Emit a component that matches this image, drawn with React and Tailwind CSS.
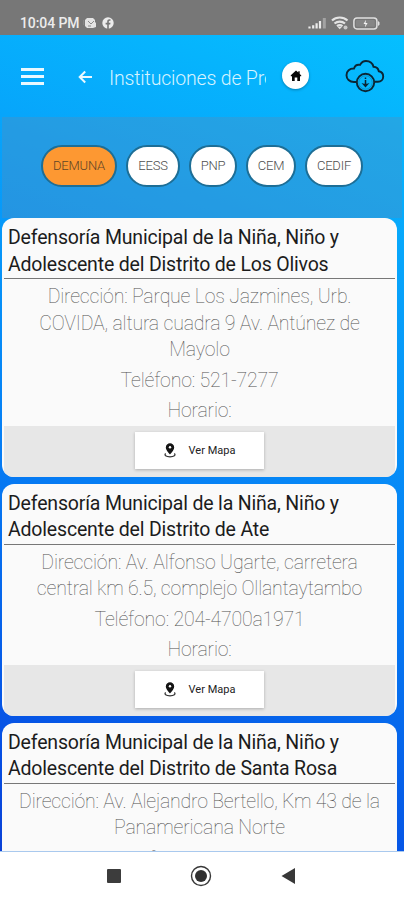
import React from 'react';

const filters = [
  { name: 'DEMUNA', style: 'w-[76px] bg-[#fd9832] text-[#5f4527]' },
  { name: 'EESS', style: 'w-[54px] bg-white text-[#4e4e4e]' },
  { name: 'PNP', style: 'w-[48px] bg-white text-[#4e4e4e]' },
  { name: 'CEM', style: 'w-[50px] bg-white text-[#4e4e4e]' },
  { name: 'CEDIF', style: 'w-[58px] bg-white text-[#4e4e4e]' },
];

const places = [
  {
    title: 'Defensoría Municipal de la Niña, Niño y\nAdolescente del Distrito de Los Olivos',
    address: 'Dirección: Parque Los Jazmines, Urb.\nCOVIDA, altura cuadra 9 Av. Antúnez de\nMayolo',
    phone: 'Teléfono: 521-7277',
  },
  {
    title: 'Defensoría Municipal de la Niña, Niño y\nAdolescente del Distrito de Ate',
    address: 'Dirección: Av. Alfonso Ugarte, carretera\ncentral km 6.5, complejo Ollantaytambo',
    phone: 'Teléfono: 204-4700a1971',
  },
  {
    title: 'Defensoría Municipal de la Niña, Niño y\nAdolescente del Distrito de Santa Rosa',
    address: 'Dirección: Av. Alejandro Bertello, Km 43 de la\nPanamericana Norte',
    phone: 'Teléfono: 01-552451',
    phoneStyle: 'pt-[1px]',
  },
];

const StatusBar = () => (
  <div className="flex h-[35px] shrink-0 items-center bg-[#777777] pl-[20px] pr-[24px] pt-[11px] text-[#ececec]">
    <span className="w-[60px] whitespace-nowrap text-[14px] font-medium leading-[16px] tracking-[-0.1px]">10:04 PM</span>
    <svg className="ml-[3px]" width="13" height="12" viewBox="0 0 13 12">
      <path d="M4 1h6l2 2v2l1 1v4l-3 1H4L2 9V3z" fill="#e4e4e4" />
      <path d="M.7 3v5M5 4l3 3 3-3M5 9h3" fill="none" stroke="#8b8b8b" strokeWidth="1" />
    </svg>
    <svg className="ml-[6px]" width="12" height="12" viewBox="0 0 12 12">
      <circle cx="6" cy="6" r="5.7" fill="#ececec" />
      <path d="M5.2 12V7.4H3.6V5.7h1.6V4.6c0-1.6.9-2.4 2.3-2.4h1v1.5h-.8c-.6 0-.9.3-.9.9v1.1h1.7l-.3 1.7H6.8V12z" fill="#777777" />
    </svg>
    <svg className="ml-auto" width="19" height="12" viewBox="0 0 19 12">
      <path d="M1.5 11.5v-2M5.2 11.5V8.3M8.6 11.5V6.3M12 11.5V4" stroke="#ececec" strokeWidth="2.2" />
      <path d="M16.3 11.5V1" stroke="#a3a3a3" strokeWidth="3" />
    </svg>
    <svg className="ml-[4px]" width="18" height="14" viewBox="0 0 18 14">
      <path d="M1 4.5a11.5 11.5 0 0 1 15.5 0M3.5 7.5a8 8 0 0 1 10.5 0M6 10.2a4.5 4.5 0 0 1 5.5 0" fill="none" stroke="#e4e4e4" strokeWidth="2.2" />
      <path d="M8.7 13.3L6.5 10.7h4.6z" fill="#e4e4e4" />
      <circle cx="14.5" cy="11.5" r="2" fill="#c9c9c9" />
    </svg>
    <svg className="ml-[4px]" width="27" height="13" viewBox="0 0 27 13">
      <rect x="0.9" y="0.9" width="23" height="11" rx="3" fill="none" stroke="#e0e0e0" strokeWidth="1.5" />
      <rect x="3" y="3" width="18.8" height="6.8" rx="1" fill="#858585" />
      <path d="M25 4v5l1.5-1.2V5.2z" fill="#e0e0e0" />
      <path d="M13 2.8L10.5 7h2l-.6 3.5L14.6 6h-2z" fill="#f2f2f2" />
    </svg>
  </div>
);

const Header = () => (
  <header className="flex h-[82px] shrink-0 items-center pl-[21px] pr-[19px]">
    <div className="flex w-[23px] flex-col gap-[4px] pt-px">
      <span className="h-[3px] bg-[#e9f8ff]" />
      <span className="h-[3px] bg-[#e9f8ff]" />
      <span className="h-[3px] bg-[#e9f8ff]" />
    </div>
    <svg className="ml-[34px] mt-[2px]" width="15" height="14" viewBox="0 0 15 14">
      <path d="M14 7H2M7.2 1.5L1.7 7l5.5 5.5" fill="none" stroke="#e9f8ff" strokeWidth="2" />
    </svg>
    <h1 className="ml-[16px] w-[157px] overflow-hidden whitespace-nowrap pt-[5px] text-[19.5px] font-light leading-[26px] tracking-[-0.18px] text-[#d6f3ff]">
      Instituciones de Protección
    </h1>
    <div className="mb-[1px] ml-[16px] flex h-[27px] w-[27px] items-center justify-center rounded-full bg-white shadow-[0_1px_3px_rgba(0,0,0,0.3)]">
      <svg width="12" height="12" viewBox="0 0 12 12">
        <path d="M6 .5L.8 5.3v1H2V11h2.7V7.5h2.6V11H10V6.3h1.2v-1L9.7 3.9V1.3H8.3v1.3z" fill="#080808" />
      </svg>
    </div>
    <svg className="ml-auto" width="40" height="34" viewBox="0 0 40 34" fill="none" stroke="#0b2635" strokeWidth="1.9">
      <path d="M11.5 23H9C4.5 23 1.5 20 1.5 16.2c0-4.2 3.2-6.9 7.5-6.7 1-3 3-4.2 6-3.6C16.500 3.200 18.500 2 21 2c3.700 0 6.500 2 7.500 5.800 3.200.2 4.800 1.700 5.300 4.500 2.800.6 4.400 2.600 4.400 5.200 0 3.200-2.300 5.300-5.200 5.300h-3.500" />
      <circle cx="20.5" cy="23.5" r="8.7" />
      <circle cx="20.5" cy="23.5" r="6.7" stroke="#087dad" strokeWidth="0.6" />
      <path d="M20.5 18.5v1.5M20.5 21v4" strokeWidth="1.5" />
      <path d="M16.5 24l4 4.5 4-4.5-2.5.8h-3z" fill="#0b2635" stroke="none" />
    </svg>
  </header>
);

const Filters = () => (
  <div className="mx-[2px] flex h-[101px] shrink-0 justify-center gap-[9px] bg-[#5b8cb8]/35 pt-[28px]">
    {filters.map(({ name, style }) => (
      <button
        key={name}
        className={`${style} flex h-[42px] items-center justify-center rounded-full border-2 border-[#1d6e96] text-[13px] font-light tracking-[-0.2px]`}
      >
        {name}
      </button>
    ))}
  </div>
);

const PinIcon = () => (
  <svg width="12" height="15" viewBox="0 0 12 15">
    <path d="M6 .3a4.2 4.2 0 0 0-4.2 4.2C1.8 7.2 6 11.5 6 11.5s4.2-4.3 4.2-7A4.2 4.2 0 0 0 6 .3z" fill="#151515" />
    <circle cx="6" cy="4.2" r="1.2" fill="#fff" />
    <path d="M1.7 10.5C-.2 12.2 2 13.8 6 13.8s6.200-1.600 4.300-3.300" fill="none" stroke="#333" strokeWidth="1.2" />
  </svg>
);

const PlaceCard = ({ place }) => (
  <article className="flex shrink-0 flex-col overflow-hidden rounded-[12px] bg-[#fafafa]">
    <h2 className="mx-[2px] whitespace-pre border-b border-[#777777] pl-[4px] pt-[7px] text-[19.5px] leading-[26.5px] tracking-[-0.18px] text-[#1c1c1c]">
      {place.title}
    </h2>
    <div className="flex flex-col gap-[4px] pb-[1px] pt-[5px] text-center text-[19.5px] font-thin leading-[26.5px] tracking-[-0.18px] text-[#505050]">
      <p className="whitespace-pre">{place.address}</p>
      <p className={place.phoneStyle}>{place.phone}</p>
      <p>Horario:</p>
    </div>
    <div className="mx-[2px] flex h-[51px] justify-center bg-[#e7e7e7] pt-[6px]">
      <button className="flex h-[37px] w-[129px] items-center justify-center gap-[13px] bg-white pt-[1px] text-[11px] text-[#222222] shadow-[0_1px_3px_rgba(0,0,0,0.25)]">
        <PinIcon />
        <span className="pt-px">Ver Mapa</span>
      </button>
    </div>
  </article>
);

const NavBar = () => (
  <nav className="flex h-[49px] shrink-0 items-center border-t border-[#a9c9ee] bg-white pl-[107px]">
    <div className="h-[14px] w-[14px] rounded-[1px] bg-[#3c3c3c]" />
    <svg className="ml-[69px]" width="22" height="22" viewBox="0 0 22 22">
      <circle cx="11" cy="11" r="9.5" fill="none" stroke="#383838" strokeWidth="1.4" />
      <circle cx="11" cy="11" r="6" fill="#303030" />
    </svg>
    <svg className="ml-[69px]" width="15" height="18" viewBox="0 0 15 18">
      <path d="M14 1v16L.5 9z" fill="#383838" />
    </svg>
  </nav>
);

const App = () => {
  return (
    <div className="flex h-[900px] w-[404px] flex-col overflow-hidden bg-[linear-gradient(200deg,#05c3ff_0%,#07a5fb_25%,#0680f5_55%,#0650e4_85%,#0c3bd0_100%)] font-['Roboto',sans-serif]">
      <StatusBar />
      <Header />
      <Filters />
      <main className="flex min-h-0 flex-1 flex-col gap-[7px] overflow-hidden pl-[2px] pr-[7px]">
        {places.map((place) => (
          <PlaceCard key={place.title} place={place} />
        ))}
      </main>
      <NavBar />
    </div>
  );
};

export default App;
